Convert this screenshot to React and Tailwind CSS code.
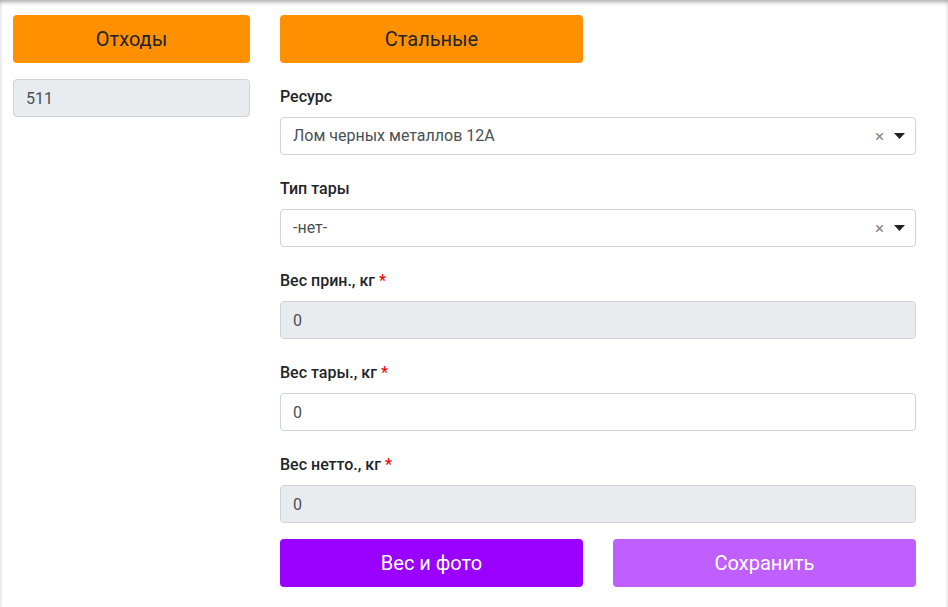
import React, { useState } from 'react';

const font = { fontFamily: 'Roboto, "Noto Sans", sans-serif' };

const Label = ({ children, required }) => (
    <label className="block h-6 mb-2 text-[16px] leading-6 font-medium text-[#212529]">
        {children}
        {required && <span className="text-[#ff0000] ml-1">*</span>}
    </label>
);

const Select = ({ value }) => (
    <div className="h-[38px] flex items-center pl-3 pr-[10px] bg-white border border-[#ced4da] rounded-[4px] text-[16px] text-[#495057]">
        <span className="flex-1 truncate">{value}</span>
        <span className="text-[#888] text-[17px] leading-none mr-[10px]">×</span>
        <svg width="11" height="6" viewBox="0 0 11 6">
            <path d="M0 0h11L5.5 6z" fill="#222" />
        </svg>
    </div>
);

const Input = ({ value, disabled }) => (
    <input
        readOnly
        value={value}
        className={
            'w-full h-[38px] px-3 border border-[#ced4da] rounded-[4px] text-[16px] text-[#495057] outline-none ' +
            (disabled ? 'bg-[#e9ecef]' : 'bg-white')
        }
    />
);

export default function App() {
    const [tara] = useState('0');

    return (
        <div className="min-h-screen bg-white shadow-[inset_0_3px_4px_-1px_rgba(0,0,0,0.35)]" style={font}>
            <div className="flex gap-[30px] pl-[13px] pt-[15px]">
                {/* left column */}
                <div className="w-[237px]">
                    <button className="w-full h-[48px] bg-[#ff9100] rounded-[4px] text-[20px] text-[#212529]">
                        Отходы
                    </button>
                    <div className="mt-4">
                        <Input value="511" disabled />
                    </div>
                </div>

                {/* right column */}
                <div className="w-[636px]">
                    <button className="w-[303px] h-[48px] bg-[#ff9100] rounded-[4px] text-[20px] text-[#212529]">
                        Стальные
                    </button>

                    <div className="mt-[22px]">
                        <Label>Ресурс</Label>
                        <Select value="Лом черных металлов 12А" />
                    </div>

                    <div className="mt-[22px]">
                        <Label>Тип тары</Label>
                        <Select value="-нет-" />
                    </div>

                    <div className="mt-[22px]">
                        <Label required>Вес прин., кг</Label>
                        <Input value="0" disabled />
                    </div>

                    <div className="mt-[22px]">
                        <Label required>Вес тары., кг</Label>
                        <Input value={tara} />
                    </div>

                    <div className="mt-[22px]">
                        <Label required>Вес нетто., кг</Label>
                        <Input value="0" disabled />
                    </div>

                    <div className="flex justify-between mt-4">
                        <button className="w-[303px] h-[48px] bg-[#9900ff] rounded-[4px] text-[20px] text-white">
                            Вес и фото
                        </button>
                        <button className="w-[303px] h-[48px] bg-[#bf5fff] rounded-[4px] text-[20px] text-white">
                            Сохранить
                        </button>
                    </div>
                </div>
            </div>
        </div>
    );
}
